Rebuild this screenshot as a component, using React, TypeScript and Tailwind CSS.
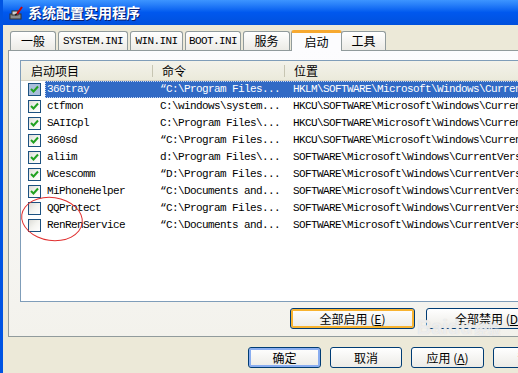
import React from "react";

interface StartupItem {
  name: string;
  command: string;
  location: string;
  checked: boolean;
}

const items: StartupItem[] = [
  { name: "360tray", command: "“C:\\Program Files...", location: "HKLM\\SOFTWARE\\Microsoft\\Windows\\CurrentVersion\\Run", checked: true },
  { name: "ctfmon", command: "C:\\windows\\system...", location: "HKCU\\SOFTWARE\\Microsoft\\Windows\\CurrentVersion\\Run", checked: true },
  { name: "SAIICpl", command: "C:\\Program Files\\...", location: "HKCU\\SOFTWARE\\Microsoft\\Windows\\CurrentVersion\\Run", checked: true },
  { name: "360sd", command: "“C:\\Program Files...", location: "HKCU\\SOFTWARE\\Microsoft\\Windows\\CurrentVersion\\Run", checked: true },
  { name: "aliim", command: "d:\\Program Files\\...", location: "SOFTWARE\\Microsoft\\Windows\\CurrentVersion\\Run", checked: true },
  { name: "Wcescomm", command: "“D:\\Program Files...", location: "SOFTWARE\\Microsoft\\Windows\\CurrentVersion\\Run", checked: true },
  { name: "MiPhoneHelper", command: "“C:\\Documents and...", location: "SOFTWARE\\Microsoft\\Windows\\CurrentVersion\\Run", checked: true },
  { name: "QQProtect", command: "“C:\\Program Files...", location: "SOFTWARE\\Microsoft\\Windows\\CurrentVersion\\Run", checked: false },
  { name: "RenRenService", command: "“C:\\Documents and...", location: "SOFTWARE\\Microsoft\\Windows\\CurrentVersion\\Run", checked: false },
];

const tabs = [
  { label: "一般", w: "w-[46px]", mono: false },
  { label: "SYSTEM.INI", w: "w-[70px]", mono: true },
  { label: "WIN.INI", w: "w-[53px]", mono: true },
  { label: "BOOT.INI", w: "w-[56px]", mono: true },
  { label: "服务", w: "w-[47px]", mono: false },
];

const cjk = "font-['SimSun','Noto_Sans_CJK_SC',sans-serif]";
const mono = "font-['Liberation_Mono','Noto_Sans_CJK_SC',monospace] text-[11px] tracking-[-0.6px]";

const Check: React.FC<{ checked: boolean; active?: boolean }> = ({ checked, active }) => (
  <div
    className={`w-[13px] h-[13px] border border-[#1c5180] flex items-center justify-center ${
      active ? "bg-[#a9bedb]" : "bg-gradient-to-br from-[#dcdcd7] via-[#f4f4f0] to-white"
    }`}
  >
    {checked && (
      <svg width="9" height="9" viewBox="0 0 9 9">
        <path d="M1 4 L3.5 6.5 L8 1.5" stroke="#21a121" strokeWidth="2" fill="none" />
      </svg>
    )}
  </div>
);

const XpButton: React.FC<{
  children: React.ReactNode;
  w: string;
  ring?: "orange" | "blue";
}> = ({ children, w, ring }) => (
  <div
    className={`${w} shrink-0 h-[21px] rounded-[3px] border border-[#003c74] bg-gradient-to-b from-white to-[#ecebe6] flex items-center justify-center text-[12px] text-black ${cjk} ${
      ring === "orange"
        ? "shadow-[inset_0_0_0_2px_#f8b330]"
        : ring === "blue"
        ? "shadow-[inset_0_0_0_2px_#89adf0]"
        : ""
    }`}
  >
    {children}
  </div>
);

const App: React.FC = () => {
  return (
    <div className="w-[518px] h-[373px] overflow-hidden relative bg-[#ece9d8] border-l-[3px] border-[#0054e3]">
      {/* Title bar */}
      <div className="h-[25px] -ml-[3px] pl-[8px] flex items-center gap-[4px] bg-gradient-to-b from-[#3d95ff] via-[#0058ee] to-[#0050dd]">
        <svg width="16" height="16" viewBox="0 0 16 16">
          <rect x="2" y="9" width="11" height="5" fill="#8c8c8c" stroke="#333" strokeWidth="1" />
          <rect x="4" y="6" width="6" height="4" fill="#d0d0d0" stroke="#333" strokeWidth="1" />
          <path d="M9 9 L14 2" stroke="#d40000" strokeWidth="2" />
          <path d="M7 10 L9 9" stroke="#222" strokeWidth="1.5" />
        </svg>
        <span
          className={`text-white font-bold text-[14px] ${cjk} [text-shadow:1px_1px_0_#0a1e6e]`}
        >
          系统配置实用程序
        </span>
      </div>

      {/* Tabs */}
      <div className="flex items-end h-[25px] pl-[7px]">
        {tabs.map((t) => (
          <div
            key={t.label}
            className={`${t.w} shrink-0 h-[19px] mr-[2px] rounded-t-[3px] border border-b-0 border-[#919b9c] bg-gradient-to-b from-white to-[#ecebe6] flex items-center justify-center text-black ${
              t.mono ? mono : `text-[12px] ${cjk}`
            }`}
          >
            {t.label}
          </div>
        ))}
        <div
          className={`w-[51px] shrink-0 h-[21px] -ml-[1px] -mb-[1px] relative z-10 rounded-t-[3px] border border-b-0 border-[#919b9c] border-t-[3px] border-t-[#f7a930] bg-[#fcfcfe] flex items-center justify-center text-[12px] text-black ${cjk}`}
        >
          启动
        </div>
        <div
          className={`w-[45px] shrink-0 h-[19px] -ml-[1px] rounded-t-[3px] border border-b-0 border-[#919b9c] bg-gradient-to-b from-white to-[#ecebe6] flex items-center justify-center text-[12px] text-black ${cjk}`}
        >
          工具
        </div>
      </div>

      {/* Panel */}
      <div className="ml-[5px] w-[530px] h-[287px] border border-[#919b9c] bg-gradient-to-b from-[#fcfcfe] to-[#f3f2ec] pt-[9px] pl-[11px] flex flex-col">
        {/* List */}
        <div className="h-[242px] border border-[#7f9db9] bg-white overflow-hidden">
          <div className={`h-[20px] flex items-center bg-gradient-to-b from-[#f3f2ea] to-[#ebeadb] border-b border-[#d6d2c2] text-[12px] text-black ${cjk}`}>
            <div className="w-[132px] shrink-0 pl-[10px] border-r border-[#c7c5b2] h-[12px] flex items-center">启动项目</div>
            <div className="w-[132px] shrink-0 pl-[9px] border-r border-[#c7c5b2] h-[12px] flex items-center">命令</div>
            <div className="pl-[9px]">位置</div>
          </div>
          {items.map((item, i) => (
            <div key={item.name} className="h-[17px] flex items-center">
              <div className="w-[24px] shrink-0 pl-[7px] flex items-center">
                <Check checked={item.checked} active={i === 0} />
              </div>
              <div
                className={`flex-1 h-[17px] flex items-center whitespace-nowrap overflow-hidden ${mono} ${
                  i === 0 ? "bg-[#316ac5] text-white outline-1 outline-dotted outline-[#c9d8f0] -outline-offset-1" : "text-black"
                }`}
              >
                <div className="w-[108px] shrink-0 pl-[2px]">{item.name}</div>
                <div className="w-[132px] shrink-0 pl-[7px]">{item.command}</div>
                <div className="shrink-0 pl-[8px]">{item.location}</div>
              </div>
            </div>
          ))}
        </div>

        {/* Enable/disable buttons */}
        <div className="flex mt-[6px] pl-[270px] gap-[11px]">
          <XpButton w="w-[125px]" ring="orange">
            全部启用 (<span className="underline">E</span>)
          </XpButton>
          <XpButton w="w-[125px]">
            全部禁用 (<span className="underline">D</span>)
          </XpButton>
        </div>
      </div>

      {/* Dialog buttons */}
      <div className="flex mt-[10px] pl-[245px] gap-[9px]">
        <XpButton w="w-[73px]" ring="blue">确定</XpButton>
        <XpButton w="w-[72px]">取消</XpButton>
        <XpButton w="w-[73px]">
          应用 (<span className="underline">A</span>)
        </XpButton>
        <XpButton w="w-[73px]">帮助</XpButton>
      </div>

      {/* Red annotation circle */}
      <div className="absolute left-[18px] top-[197px] w-[62px] h-[44px] rounded-[50%] border border-[#e03030] rotate-[8deg] pointer-events-none" />

      {/* Watermark */}
      <div className="absolute left-[414px] top-[312px] text-white/60 font-bold text-[20px] font-['Liberation_Sans',sans-serif] [text-shadow:0_0_1px_#d0d0d0] pointer-events-none flex items-baseline gap-[2px]">
        Baidu
        <span className={`text-[13px] ${cjk}`}>经验</span>
      </div>
    </div>
  );
};

export default App;
